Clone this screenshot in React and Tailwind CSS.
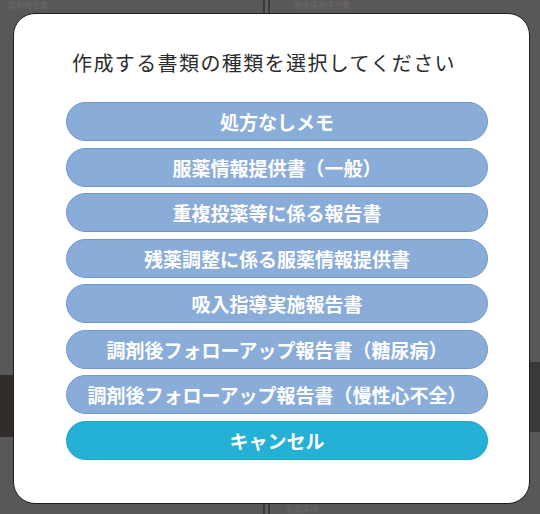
import React from "react";

const docTypes = [
  "処方なしメモ",
  "服薬情報提供書（一般）",
  "重複投薬等に係る報告書",
  "残薬調整に係る服薬情報提供書",
  "吸入指導実施報告書",
  "調剤後フォローアップ報告書（糖尿病）",
  "調剤後フォローアップ報告書（慢性心不全）",
];

const App = () => {
  return (
    <div
      className="relative w-[540px] h-[514px] overflow-hidden bg-[#595757]"
      style={{ fontFamily: '"Noto Sans CJK JP", "Noto Sans", sans-serif' }}
    >
      {/* page behind the overlay */}
      <div className="flex h-full">
        <div className="w-[263px] flex flex-col">
          <div className="h-[13px] pl-2 text-[8px] leading-[9px] text-[#6a6868]">調剤報告書</div>
          <div className="mt-[362px] h-[62px] bg-[#302c2a]" />
        </div>
        <div className="w-[2px] bg-[#3a3838]" />
        <div className="w-[3px] bg-[#5f5d5d]" />
        <div className="w-[2px] bg-[#3a3838]" />
        <div className="flex-1 flex flex-col">
          <div className="h-[13px] pl-6 text-[8px] leading-[9px] text-[#6a6868]">服薬情報提供書</div>
          <div className="mt-[349px] h-[70px] bg-[#3a3838]" />
          <div className="mt-auto h-[10px] pl-4 text-[8px] leading-[10px] text-[#6a6868]">必要事項</div>
        </div>
      </div>

      {/* dialog */}
      <div className="absolute left-[13px] top-[13px] w-[517px] h-[491px] bg-white rounded-[22px] border border-[#1f1d1d] flex flex-col">
        <h2 className="mt-[35px] ml-[54px] w-[392px] text-center text-[20px] tracking-[1.4px] leading-[28px] text-[#2b2b2b] whitespace-nowrap">
          作成する書類の種類を選択してください
        </h2>
        <div className="mt-[25px] ml-[52px] w-[422px] flex flex-col gap-[6.5px]">
          {docTypes.map((label, i) => (
            <button
              key={i}
              className="h-[39px] rounded-full bg-[#8aacd9] border border-[#6e97cf] text-white font-bold text-[19px] leading-none whitespace-nowrap"
            >
              {label}
            </button>
          ))}
          <button className="h-[39px] rounded-full bg-[#25b0d6] border border-[#1ba3cc] text-white font-bold text-[19px] leading-none">
            キャンセル
          </button>
        </div>
      </div>
    </div>
  );
};

export default App;
